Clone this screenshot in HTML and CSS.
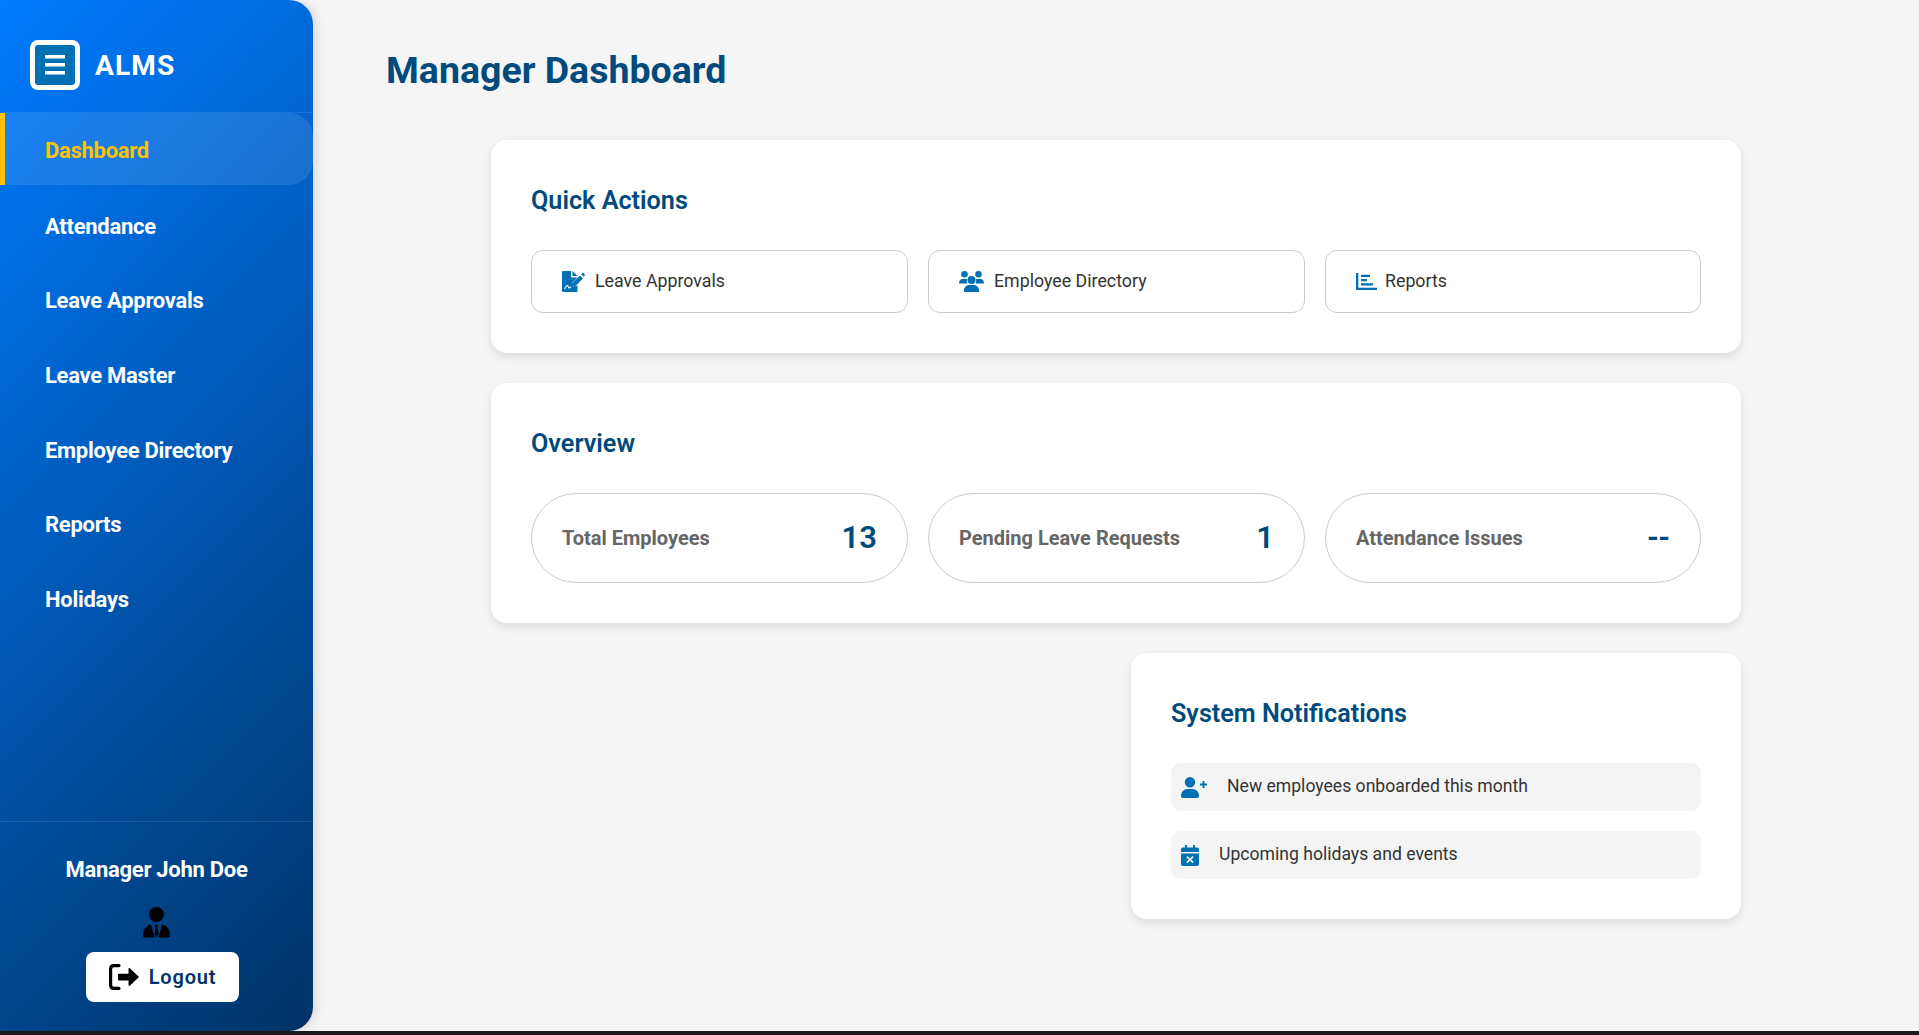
FILE: index.html
```html
<!doctype html>
<html>
<head>
	<meta charset="utf-8">
	<title>ALMS - Manager Dashboard</title>
	<link rel="stylesheet" href="styles.css">
</head>
<body>
	<div class="app">
		<aside class="sidebar">
			<div class="brand">
				<div class="brand-logo">
					<svg width="20" height="20" viewBox="0 0 20 20"><path fill="#fff" d="M0 0h20v3.4H0zM0 8h20v3.4H0zM0 16h20v3.4H0z"/></svg>
				</div>
				<span class="brand-name">ALMS</span>
			</div>
			<nav class="nav">
				<a class="nav-item active">Dashboard</a>
				<a class="nav-item">Attendance</a>
				<a class="nav-item">Leave Approvals</a>
				<a class="nav-item">Leave Master</a>
				<a class="nav-item">Employee Directory</a>
				<a class="nav-item">Reports</a>
				<a class="nav-item">Holidays</a>
			</nav>
			<div class="side-footer">
				<div class="user-name">Manager John Doe</div>
				<svg class="user-icon" width="27" height="31" viewBox="0 0 27 31"><circle cx="13.500" cy="7.500" r="7.500"/><path d="M8 17.500l3.600 13H2c-1.200 0-2-.8-2-2 0-5.500 3-10 8-11zM19 17.500l-3.600 13H25c1.200 0 2-.8 2-2 0-5.500-3-10-8-11zM11.600 17.500h3.800l-.8 3 1 6.500-2.100 3.500-2.100-3.500 1-6.500z"/></svg>
				<button class="logout">
					<svg width="30" height="26" viewBox="0 0 30 26"><path fill="none" stroke="#000" stroke-width="3.200" stroke-linecap="round" d="M10 1.600H5C3 1.600 1.600 3 1.600 5v16c0 2 1.400 3.400 3.400 3.400h5"/><path d="M10 9.700h9.500V5c0-.8 1-1.200 1.600-.6L30 13l-8.900 8.600c-.6.600-1.600.2-1.600-.6v-4.500H10c-.6 0-1-.4-1-1v-4.800c0-.6.400-1 1-1z"/></svg>
					Logout
				</button>
			</div>
		</aside>

		<main class="main">
			<h1 class="page-title">Manager Dashboard</h1>
			<div class="cards">
				<section class="card">
					<h2 class="card-title">Quick Actions</h2>
					<div class="row">
						<a class="action">
							<svg width="23" height="21" viewBox="0 0 23 21"><path fill="#0070b5" d="M0 1c0-.6.400-1 1-1h8v5.500c0 .6.400 1 1 1h5.500l-5 5-1 4.500 5-1 1-1V20c0 .6-.4 1-1 1H1c-.6 0-1-.4-1-1z"/><path fill="#0070b5" d="M10.500 0l5 5h-5zM18 4.500l3 3-8 8-3.800.8.800-3.800zM19.200 3.300l1-1c.4-.4 1-.4 1.400 0l1 1c.4.4.4 1 0 1.400l-1 1z"/><path fill="none" stroke="#fff" stroke-width="1.200" d="M2.500 18c1-2 2-3.500 3-3.500s.5 2.500 1.500 2.500 1-1 2-1"/></svg>
							<span>Leave Approvals</span>
						</a>
						<a class="action">
							<svg width="25" height="21" viewBox="0 0 25 21"><g fill="#0070b5"><circle cx="5.500" cy="3.300" r="3.300"/><circle cx="19.500" cy="3.300" r="3.300"/><circle cx="12.500" cy="9" r="4"/><path d="M0 12c0-2 1.500-4 3.500-4H7c.5 0 1 .1 1.300.3C7.500 10 7.800 11 8.500 12.500H0zM25 12c0-2-1.500-4-3.500-4H18c-.5 0-1 .1-1.300.3.800 1.700.5 2.700-.2 4.200H25zM5 19.500c0-3 2.200-5.500 5-5.500h5c2.800 0 5 2.500 5 5.500V21H5z"/></g></svg>
							<span>Employee Directory</span>
						</a>
						<a class="action action-reports">
							<svg width="21" height="17" viewBox="0 0 21 17"><g fill="#0070b5"><path d="M0 0h2.300v14.700H21V17H1c-.6 0-1-.4-1-1z"/><path d="M5 1.700h9v2.300H5zM5 6h6v2.300H5zM5 10.300h12v2.300H5z"/></g></svg>
							<span>Reports</span>
						</a>
					</div>
				</section>

				<section class="card">
					<h2 class="card-title">Overview</h2>
					<div class="row">
						<div class="stat"><span class="stat-label">Total Employees</span><span class="stat-value">13</span></div>
						<div class="stat"><span class="stat-label">Pending Leave Requests</span><span class="stat-value">1</span></div>
						<div class="stat"><span class="stat-label">Attendance Issues</span><span class="stat-value">--</span></div>
					</div>
				</section>

				<section class="card card-notes">
					<h2 class="card-title">System Notifications</h2>
					<div class="notes">
						<div class="note note-first">
							<svg width="26" height="21" viewBox="0 0 26 21"><g fill="#0070b5"><circle cx="9" cy="5.200" r="5.200"/><path d="M0 19c0-4 3-7 6.500-7h5C15 12 18 15 18 19c0 1.200-.8 2-2 2H2c-1.200 0-2-.8-2-2z"/><path d="M21.600 4h1.800v2.600H26v1.800h-2.600V11h-1.800V8.400H19V6.600h2.600z"/></g></svg>
							<span>New employees onboarded this month</span>
						</div>
						<div class="note">
							<svg width="18" height="21" viewBox="0 0 18 21"><path fill="#0070b5" fill-rule="evenodd" d="M4 0h2v2.500h6V0h2v2.500h2c1.100 0 2 .9 2 2V7H0V4.500c0-1.100.9-2 2-2h2zM0 8.500h18V19c0 1.100-.9 2-2 2H2c-1.100 0-2-.9-2-2zM6.500 11l-1.200 1.200L7.800 14.600l-2.500 2.500L6.500 18.300 9 15.800l2.500 2.500 1.200-1.200-2.500-2.500 2.500-2.400L11.500 11 9 13.400z"/></svg>
							<span>Upcoming holidays and events</span>
						</div>
					</div>
				</section>
			</div>
		</main>
	</div>
</body>
</html>
```

FILE: styles.css
```css
html
{
	background: #1b1b1b;
}
body
{
	margin: 0;
	font-family: Roboto, "Liberation Sans", sans-serif;
}
.app
{
	display: flex;
	height: 1031px;
	background: #f5f5f5;
	overflow: hidden;
}

/* sidebar */
.sidebar
{
	width: 313px;
	flex-shrink: 0;
	display: flex;
	flex-direction: column;
	background: linear-gradient(135deg, #007bff, #003366);
	border-radius: 0 24px 24px 0;
	box-shadow: 4px 0 10px rgba(0, 0, 0, 0.1);
	color: #fff;
}
.brand
{
	height: 113px;
	box-sizing: border-box;
	padding: 40px 0 0 30px;
	display: flex;
	align-items: flex-start;
	gap: 15px;
	border-bottom: 1px solid rgba(255, 255, 255, 0.1);
}
.brand-logo
{
	width: 50px;
	height: 50px;
	box-sizing: border-box;
	border: 5px solid #fff;
	border-radius: 8px;
	background: #0070b5;
	display: flex;
	align-items: center;
	justify-content: center;
}
.brand-name
{
	font-size: 28px;
	font-weight: 700;
	line-height: 52px;
	letter-spacing: 1.2px;
}
.nav
{
	flex: 1;
	display: flex;
	flex-direction: column;
	gap: 2.7px;
}
.nav-item
{
	height: 72px;
	box-sizing: border-box;
	flex-shrink: 0;
	display: flex;
	align-items: center;
	padding: 2px 0 0 45px;
	font-size: 22px;
	font-weight: 700;
	letter-spacing: -0.28px;
	color: #fff;
}
.nav-item.active
{
	margin-bottom: 1.5px;
	padding-left: 40px;
	color: #ffc107;
	background: rgba(255, 255, 255, 0.1);
	border-left: 5px solid #ffc107;
	border-radius: 0 24px 24px 0;
}
.side-footer
{
	height: 210px;
	box-sizing: border-box;
	padding-top: 35px;
	border-top: 1px solid rgba(255, 255, 255, 0.1);
	display: flex;
	flex-direction: column;
	align-items: center;
}
.user-name
{
	font-size: 22px;
	font-weight: 700;
	letter-spacing: -0.28px;
	line-height: 26px;
}
.user-icon
{
	margin-top: 24px;
	display: block;
}
.logout
{
	margin: 14px 0 0 12px;
	width: 153px;
	height: 50px;
	display: flex;
	align-items: center;
	justify-content: center;
	gap: 10px;
	border: 0;
	border-radius: 8px;
	background: #fff;
	color: #003366;
	font-family: inherit;
	font-size: 20px;
	font-weight: 600;
	letter-spacing: 0.8px;
}

/* main area */
.main
{
	flex: 1;
	padding: 46px 178px 0 74px;
}
.page-title
{
	margin: 0 0 0 -1px;
	font-size: 37.5px;
	font-weight: 700;
	line-height: 48px;
	color: #004a7c;
}
.cards
{
	margin: 46px 0 0 104px;
	display: flex;
	flex-direction: column;
	gap: 30px;
}
.card
{
	padding: 40px;
	background: #fff;
	border-radius: 16px;
	box-shadow: 0 4px 10px rgba(0, 0, 0, 0.1);
}
.card-notes
{
	width: 610px;
	box-sizing: border-box;
	align-self: flex-end;
}
.card-title
{
	margin: 6px 0 34px;
	font-size: 25.2px;
	font-weight: 600;
	line-height: 30px;
	color: #004a7c;
}
.row
{
	display: grid;
	grid-template-columns: 377px 377px 376px;
	gap: 20px;
}
.action
{
	height: 63px;
	box-sizing: border-box;
	padding: 0 0 2px 30px;
	display: flex;
	align-items: center;
	gap: 10px;
	border: 1px solid #ccc;
	border-radius: 12px;
	font-size: 17.8px;
	color: #333;
}
.action-reports
{
	gap: 8px;
}
.action svg
{
	margin-top: 2px;
}
.stat
{
	height: 90px;
	box-sizing: border-box;
	padding: 0 30px;
	display: flex;
	align-items: center;
	justify-content: space-between;
	border: 1px solid #ccc;
	border-radius: 45px;
}
.stat-label
{
	font-size: 20px;
	font-weight: 700;
	color: #666;
}
.stat-value
{
	padding-bottom: 2px;
	font-size: 31px;
	font-weight: 600;
	color: #004a7c;
}
.notes
{
	display: flex;
	flex-direction: column;
	gap: 20px;
}
.note
{
	height: 48px;
	box-sizing: border-box;
	padding: 0 10px;
	display: flex;
	align-items: center;
	gap: 20px;
	background: #f4f4f4;
	border-radius: 10px;
	font-size: 17.6px;
	font-weight: 450;
	color: #333;
}
.note span
{
	padding-bottom: 2px;
}
```
